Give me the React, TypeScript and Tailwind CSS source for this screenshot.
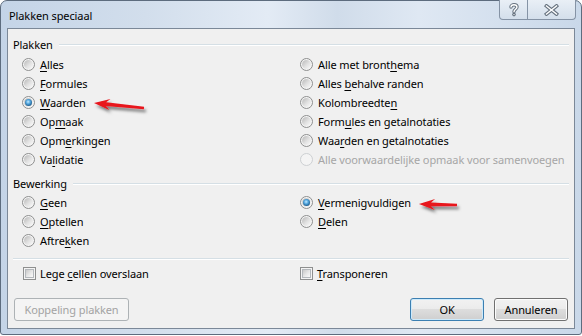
import React from "react";

function Acc({ text, i }: { text: string; i?: number }) {
  if (i === undefined) return <>{text}</>;
  return (
    <>
      {text.slice(0, i)}
      <span className="underline underline-offset-[2px] decoration-[1px]">{text[i]}</span>
      {text.slice(i + 1)}
    </>
  );
}

function Radio({ checked = false, disabled = false }: { checked?: boolean; disabled?: boolean }) {
  if (disabled)
    return (
      <span className="w-[13px] h-[13px] rounded-full border border-[#cdd0d3] bg-[#f4f4f4] shrink-0" />
    );
  return (
    <span className="w-[13px] h-[13px] rounded-full border border-[#8e8f8f] bg-[#f4f4f4] flex items-center justify-center shrink-0">
      <span className="w-[9px] h-[9px] rounded-full bg-[linear-gradient(135deg,#b8b8b8_0%,#e2e2e2_55%,#fafafa_100%)] flex items-center justify-center">
        {checked && (
          <span className="w-[7px] h-[7px] rounded-full bg-[radial-gradient(circle_at_45%_40%,#c4ebff_0%,#55a8e0_35%,#1b5a8a_75%,#123f63_100%)]" />
        )}
      </span>
    </span>
  );
}

function Check() {
  return (
    <span className="w-[13px] h-[13px] border border-[#8e8f8f] bg-[#f4f4f4] p-[1px] shrink-0 flex">
      <span className="block w-full h-full border border-[#b4b8bc] bg-[linear-gradient(135deg,#c9c9c9_0%,#e8e8e8_55%,#fafafa_100%)]" />
    </span>
  );
}

function RadioRow({
  text,
  i,
  checked,
  disabled,
}: {
  text: string;
  i?: number;
  checked?: boolean;
  disabled?: boolean;
}) {
  return (
    <div className="h-[19px] flex items-center gap-[5px]">
      <Radio checked={checked} disabled={disabled} />
      <span className={disabled ? "text-[#a6a6a6] leading-none" : "leading-none"}>
        <Acc text={text} i={i} />
      </span>
    </div>
  );
}

function GroupLabel({ text }: { text: string }) {
  return (
    <div className="h-[16px] flex items-center gap-[6px]">
      <span className="leading-none">{text}</span>
      <div className="flex-1 h-[2px] bg-[linear-gradient(#d5dfe5_50%,#ffffff_50%)] mt-[1px]" />
    </div>
  );
}

function arrowPoints(tx: number, ty: number, sx: number, sy: number, L = 16, W = 5.5, w1 = 1.9, w2 = 1.3) {
  const dx = sx - tx;
  const dy = sy - ty;
  const len = Math.hypot(dx, dy);
  const ux = dx / len;
  const uy = dy / len;
  const nx = -uy;
  const ny = ux;
  const p = (a: number, b: number) => `${(tx + ux * a + nx * b).toFixed(2)},${(ty + uy * a + ny * b).toFixed(2)}`;
  return [p(0, 0), p(L, W), p(L - 4, w1), p(len, w2), p(len, -w2), p(L - 4, -w1), p(L, -W)].join(" ");
}

export default function App() {
  return (
    <div className="relative w-[582px] h-[336px] bg-white text-[11px] tracking-[-0.1px] text-black font-['Noto_Sans','Liberation_Sans',sans-serif] overflow-hidden">
      <div className="relative w-[582px] h-[335px] border border-[#5d6c7e] rounded-t-[7px] rounded-b-[3px] bg-[linear-gradient(90deg,#c4d4e7_0%,#d2deec_25%,#e3ebf5_46%,#d0dcea_58%,#dfe8f3_72%,#c9d8e9_100%)] flex flex-col">
        {/* title bar */}
        <div className="h-[27px] flex items-center pl-[8px] pt-[2px]">
          <span className="leading-none">Plakken speciaal</span>
        </div>

        {/* title buttons */}
        <div className="absolute top-[-1px] right-[5px] h-[20px] flex">
          <div className="w-[29px] h-[20px] border border-[#8593a5] border-t-0 rounded-bl-[4px] bg-[linear-gradient(#e9eff6,#d4dfeb)] flex items-center justify-center">
            <svg width="10" height="14" viewBox="0 0 10 14">
              <path d="M2 4 C2 1 8 1 8 4 C8 6.3 5 6.3 5 8.8" fill="none" stroke="#66727f" strokeWidth="3.4" strokeLinecap="round" />
              <path d="M2 4 C2 1 8 1 8 4 C8 6.3 5 6.3 5 8.8" fill="none" stroke="#ffffff" strokeWidth="1.4" strokeLinecap="round" />
              <circle cx="5" cy="11.6" r="1.8" fill="#66727f" />
              <circle cx="5" cy="11.6" r="0.7" fill="#ffffff" />
            </svg>
          </div>
          <div className="w-[48px] h-[20px] border border-[#8593a5] border-t-0 border-l-0 rounded-br-[4px] bg-[linear-gradient(#e9eff6,#d4dfeb)] flex items-center justify-center">
            <svg width="15" height="12" viewBox="0 0 15 12">
              <path d="M2.5 2 L12.5 10 M12.5 2 L2.5 10" stroke="#66727f" strokeWidth="3.6" strokeLinecap="square" />
              <path d="M2.5 2 L12.5 10 M12.5 2 L2.5 10" stroke="#ffffff" strokeWidth="1.5" strokeLinecap="square" />
            </svg>
          </div>
        </div>

        {/* client area */}
        <div className="ml-[6px] w-[568px] h-[301px] border border-[#7b8898] bg-[#f0f0f0] flex flex-col pt-[7px] px-[5px]">
          <GroupLabel text="Plakken" />
          <div className="mt-[3px] pl-[9px] grid grid-cols-[278px_1fr]">
            <div className="flex flex-col">
              <RadioRow text="Alles" i={0} />
              <RadioRow text="Formules" i={0} />
              <RadioRow text="Waarden" i={0} checked />
              <RadioRow text="Opmaak" i={2} />
              <RadioRow text="Opmerkingen" i={3} />
              <RadioRow text="Validatie" i={2} />
            </div>
            <div className="flex flex-col">
              <RadioRow text="Alle met bronthema" i={14} />
              <RadioRow text="Alles behalve randen" i={6} />
              <RadioRow text="Kolombreedten" i={12} />
              <RadioRow text="Formules en getalnotaties" i={4} />
              <RadioRow text="Waarden en getalnotaties" i={3} />
              <RadioRow text="Alle voorwaardelijke opmaak voor samenvoegen" disabled />
            </div>
          </div>

          <div className="mt-[6px]">
            <GroupLabel text="Bewerking" />
          </div>
          <div className="mt-[2px] pl-[9px] grid grid-cols-[278px_1fr]">
            <div className="flex flex-col">
              <RadioRow text="Geen" i={0} />
              <RadioRow text="Optellen" i={0} />
              <RadioRow text="Aftrekken" i={5} />
            </div>
            <div className="flex flex-col">
              <RadioRow text="Vermenigvuldigen" i={0} checked />
              <RadioRow text="Delen" i={0} />
            </div>
          </div>

          <div className="mt-[8px] h-[2px] bg-[linear-gradient(#d5dfe5_50%,#ffffff_50%)]" />

          <div className="mt-[4px] pl-[9px] grid grid-cols-[278px_1fr]">
            <div className="h-[19px] flex items-center gap-[4px] pl-[1px]">
              <Check />
              <span className="leading-none">
                <Acc text="Lege cellen overslaan" i={5} />
              </span>
            </div>
            <div className="h-[19px] flex items-center gap-[4px]">
              <Check />
              <span className="leading-none">
                <Acc text="Transponeren" i={0} />
              </span>
            </div>
          </div>

          <div className="mt-[15px] flex items-center pl-[1px] pr-[1px]">
            <button className="w-[115px] h-[23px] rounded-[3px] border border-[#adb2b5] bg-[#f4f4f4] text-[#a3a3a3] leading-none">
              Koppeling plakken
            </button>
            <div className="flex-1" />
            <button className="w-[74px] h-[23px] rounded-[3px] border border-[#3c7fb1] shadow-[inset_0_0_0_1px_#cdeafb] bg-[linear-gradient(#f2f2f2_0%,#ebebeb_50%,#dddddd_50%,#cfcfcf_100%)] leading-none">
              OK
            </button>
            <button className="ml-[10px] w-[74px] h-[23px] rounded-[3px] border border-[#707070] shadow-[inset_0_0_0_1px_#fcfcfc] bg-[linear-gradient(#f2f2f2_0%,#ebebeb_50%,#dddddd_50%,#cfcfcf_100%)] leading-none">
              Annuleren
            </button>
          </div>
        </div>
      </div>

      {/* red arrows */}
      <svg className="absolute left-0 top-0 pointer-events-none" width="582" height="336" viewBox="0 0 582 336">
        <defs>
          <filter id="sh" x="-20%" y="-50%" width="140%" height="200%">
            <feDropShadow dx="2" dy="3" stdDeviation="1.8" floodColor="#000" floodOpacity="0.5" />
          </filter>
        </defs>
        <polygon points={arrowPoints(94, 103, 144, 108)} fill="#e8141b" filter="url(#sh)" />
        <polygon points={arrowPoints(419, 204, 457, 205)} fill="#e8141b" filter="url(#sh)" />
      </svg>
    </div>
  );
}
